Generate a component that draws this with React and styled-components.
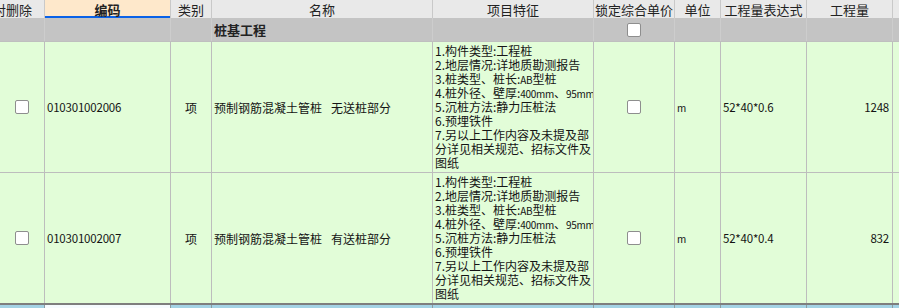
import React from 'react';
import styled, { createGlobalStyle } from 'styled-components';

const GlobalStyle = createGlobalStyle`
  html, body { margin: 0; padding: 0; background: #ffffff; }
  body { font-family: "Noto Sans CJK SC", "Liberation Sans", sans-serif; }
`;

const COLS = '45px 126px 41px 221px 161px 81px 46px 86px 86px 1fr';

const Sheet = styled.div`
  width: 899px;
  height: 308px;
  overflow: hidden;
  background: #e2fdd8;
`;

const Row = styled.div`
  display: grid;
  grid-template-columns: ${COLS};
  height: ${(p) => p.$h}px;
  background: ${(p) => p.$bg};
  border-bottom: ${(p) => p.$bottom || 'none'};
  box-sizing: content-box;
`;

const Cell = styled.div`
  display: flex;
  align-items: ${(p) => (p.$top ? 'flex-start' : 'center')};
  justify-content: ${(p) => p.$align || 'flex-start'};
  padding: ${(p) => p.$pad || '0 2px'};
  border-right: 1px solid ${(p) => p.$line || '#bdbdbd'};
  background: ${(p) => p.$bg || 'transparent'};
  overflow: hidden;
  white-space: nowrap;
  font-size: 12px;
  color: #141414;
  min-width: 0;
  &:last-child { border-right: none; }
`;

const HeadCell = styled(Cell)`
  font-size: 13px;
  color: #222;
  font-weight: ${(p) => (p.$bold ? 700 : 400)};
  box-shadow: ${(p) => (p.$active ? 'inset 0 -2px 0 #0a62e8' : 'none')};
  border-right-color: #c9c9c9;
`;

const GroupTitle = styled.span`
  font-size: 13px;
  font-weight: 700;
  color: #222;
`;

const Box = styled.span`
  display: inline-block;
  width: 12px;
  height: 12px;
  border: 1px solid #8e8e8e;
  border-radius: 2px;
  background: #ffffff;
`;

const Num = styled.span`
  font-size: 11.5px;
  letter-spacing: -0.2px;
`;

const Small = styled.span`
  font-size: 10px;
  letter-spacing: -0.3px;
`;

const Gap = styled.span`
  display: inline-block;
  width: 9px;
`;

const Features = styled.div`
  display: flex;
  flex-direction: column;
  padding-top: 2px;
  font-size: 12px;
`;

const Line = styled.span`
  display: block;
  height: 14px;
  line-height: 14px;
`;

const features = [
  <>1.构件类型:工程桩</>,
  <>2.地层情况:详地质勘测报告</>,
  <>3.桩类型、桩长:<Small>AB</Small>型桩</>,
  <>4.桩外径、壁厚:<Small>400mm</Small>、<Small>95mm</Small></>,
  <>5.沉桩方法:静力压桩法</>,
  <>6.预埋铁件</>,
  <>7.另以上工作内容及未提及部</>,
  <>分详见相关规范、招标文件及</>,
  <>图纸</>,
];

const items = [
  { code: '010301002006', name: ['预制钢筋混凝土管桩', '无送桩部分'], expr: '52*40*0.6', qty: '1248' },
  { code: '010301002007', name: ['预制钢筋混凝土管桩', '有送桩部分'], expr: '52*40*0.4', qty: '832' },
];

function ItemRow({ item, bg, bottom, codeBg, line }) {
  return (
    <Row $h={130} $bg={bg} $bottom={bottom}>
      <Cell $align="center" $line={line}><Box /></Cell>
      <Cell $bg={codeBg} $line={line}><Num>{item.code}</Num></Cell>
      <Cell $align="center" $line={line}>项</Cell>
      <Cell $line={line}>{item.name[0]}<Gap />{item.name[1]}</Cell>
      <Cell $top $pad="0 0 0 2px" $line={line}>
        <Features>
          {features.map((f, i) => <Line key={i}>{f}</Line>)}
        </Features>
      </Cell>
      <Cell $align="center" $line={line}><Box /></Cell>
      <Cell $line={line}><Small>m</Small></Cell>
      <Cell $line={line}><Num>{item.expr}</Num></Cell>
      <Cell $align="flex-end" $pad="0 3px 0 2px" $line={line}><Num>{item.qty}</Num></Cell>
      <Cell />
    </Row>
  );
}

export default function App() {
  return (
    <>
      <GlobalStyle />
      <Sheet>
        <Row $h={18} $bg="#e9e9e9">
          <HeadCell $align="flex-end" $pad="0 12px 0 0">对删除</HeadCell>
          <HeadCell $align="center" $bg="#fee8cb" $bold $active>编码</HeadCell>
          <HeadCell $align="center">类别</HeadCell>
          <HeadCell $align="center">名称</HeadCell>
          <HeadCell $align="center">项目特征</HeadCell>
          <HeadCell $align="flex-end" $pad="0 1px 0 0">锁定综合单价</HeadCell>
          <HeadCell $align="center">单位</HeadCell>
          <HeadCell $align="center">工程量表达式</HeadCell>
          <HeadCell $align="center">工程量</HeadCell>
          <HeadCell />
        </Row>
        <Row $h={23} $bg="#c4c4c4" $bottom="1px solid #bfbfbf">
          <Cell $line="#cdcdcd" />
          <Cell $line="#cdcdcd" />
          <Cell $line="#cdcdcd" />
          <Cell $line="#cdcdcd"><GroupTitle>桩基工程</GroupTitle></Cell>
          <Cell $line="#cdcdcd" />
          <Cell $align="center" $line="#cdcdcd"><Box /></Cell>
          <Cell $line="#cdcdcd" />
          <Cell $line="#cdcdcd" />
          <Cell $line="#cdcdcd" />
          <Cell />
        </Row>
        <ItemRow item={items[0]} bottom="1px solid #bdbdbd" />
        <ItemRow item={items[1]} bottom="2px solid #7e7e7e" />
        <ItemRow item={items[1]} bg="#a4d3e5" codeBg="#f6fbff" line="#8c9ca3" />
      </Sheet>
    </>
  );
}
